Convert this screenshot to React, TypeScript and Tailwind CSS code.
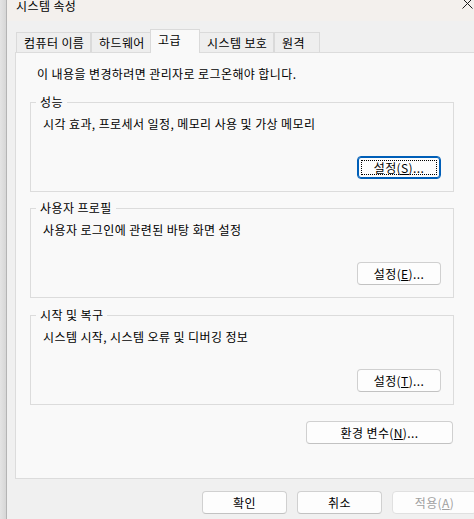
import type { ReactNode } from 'react';

const tabs = [
  { label: '컴퓨터 이름', width: 'w-[75px]' },
  { label: '하드웨어', width: 'w-[60px]' },
  { label: '고급', width: 'w-[50px]', active: true },
  { label: '시스템 보호', width: 'w-[75px]' },
  { label: '원격', width: 'w-[46px]' },
];

function Button({ children, focused, disabled, className = '' }: { children: ReactNode; focused?: boolean; disabled?: boolean; className?: string }) {
  return (
    <button
      type="button"
      className={`relative flex h-[23px] shrink-0 items-center justify-center rounded-[4px] border bg-[#fdfdfd] text-[12px] leading-[16px] ${
        focused
          ? 'border-[#005fb8] shadow-[inset_0_0_0_1px_#005fb8]'
          : disabled
            ? 'border-[#e0e0e0] bg-[#fbfbfb] text-[#a0a0a0]'
            : 'border-[#d0d0d0] border-b-[#c2c2c2] text-black'
      } ${className}`}
    >
      {focused && <span className="pointer-events-none absolute inset-[3px] border border-dotted border-black" />}
      {children}
    </button>
  );
}

function Group({ title, text, accessKey, className = '' }: { title: string; text: string; accessKey: string; className?: string }) {
  return (
    <fieldset className={`flex h-[98px] flex-col border border-[#dcdcdc] ${className}`}>
      <legend className="ml-[5px] px-[4px] text-[12px] leading-[16px]">{title}</legend>
      <p className="mt-[6px] pl-[12px] text-[12px] leading-[16px]">{text}</p>
      <Button focused={accessKey === 'S'} className="mr-[12px] mt-[24px] w-[84px] self-end">
        설정(<u>{accessKey}</u>)...
      </Button>
    </fieldset>
  );
}

export default function App() {
  return (
    <div className="flex h-[519px] w-[474px] overflow-hidden bg-[#e2e2e2] font-['Noto_Sans_CJK_KR','Noto_Sans',sans-serif] tracking-[0.4px] text-black">
      <div className="w-[6px] shrink-0 bg-gradient-to-r from-[#e4e4e4] to-[#d6d6d6]" />

      <div className="flex min-w-0 flex-1 flex-col border-l border-[#b4b4b4] bg-[#f0f0f0]">
        {/* title bar */}
        <div className="flex h-[21px] shrink-0 items-start bg-[#f3f0ed]">
          <span className="-mt-[2px] pl-[9px] text-[12px] leading-[16px]">시스템 속성</span>
          <svg className="-mt-[2px] ml-auto mr-[1px]" width="11" height="11" viewBox="0 0 11 11">
            <path d="M0.5 0.5 L10.5 10.5 M10.5 0.5 L0.5 10.5" stroke="#1b1b1b" strokeWidth="1" fill="none" />
          </svg>
        </div>

        {/* tabs */}
        <div className="ml-[9px] mt-[8px] flex h-[23px] shrink-0 items-end">
          {tabs.map((tab) => (
            <div
              key={tab.label}
              className={`flex shrink-0 border-x border-t border-[#dadada] pl-[7px] text-[12px] leading-[16px] ${tab.width} ${
                tab.active
                  ? 'relative z-10 -mx-px -mb-px h-[24px] bg-[#f9f9f9] pt-[2px]'
                  : 'h-[20px] bg-[#eeeeee] pt-[2px]'
              }`}
            >
              {tab.label}
            </div>
          ))}
        </div>

        {/* panel */}
        <div className="ml-[8px] flex h-[427px] w-[470px] shrink-0 flex-col border border-[#dcdcdc] bg-[#f9f9f9] pl-[14px]">
          <p className="ml-[7px] mt-[13px] text-[12px] leading-[16px]">이 내용을 변경하려면 관리자로 로그온해야 합니다.</p>

          <div className="flex w-[424px] flex-col">
            <Group className="mt-[12px]" title="성능" text="시각 효과, 프로세서 일정, 메모리 사용 및 가상 메모리" accessKey="S" />
            <Group className="mt-[8px]" title="사용자 프로필" text="사용자 로그인에 관련된 바탕 화면 설정" accessKey="E" />
            <Group className="mt-[9px]" title="시작 및 복구" text="시스템 시작, 시스템 오류 및 디버깅 정보" accessKey="T" />

            <Button className="mr-[1px] mt-[16px] w-[147px] self-end">
              환경 변수(<u>N</u>)...
            </Button>
          </div>
        </div>

        {/* dialog buttons */}
        <div className="mt-[12px] flex gap-[10px] pl-[195px]">
          <Button className="w-[85px]">확인</Button>
          <Button className="w-[85px]">취소</Button>
          <Button disabled className="w-[85px]">
            적용(<u>A</u>)
          </Button>
        </div>
      </div>
    </div>
  );
}
